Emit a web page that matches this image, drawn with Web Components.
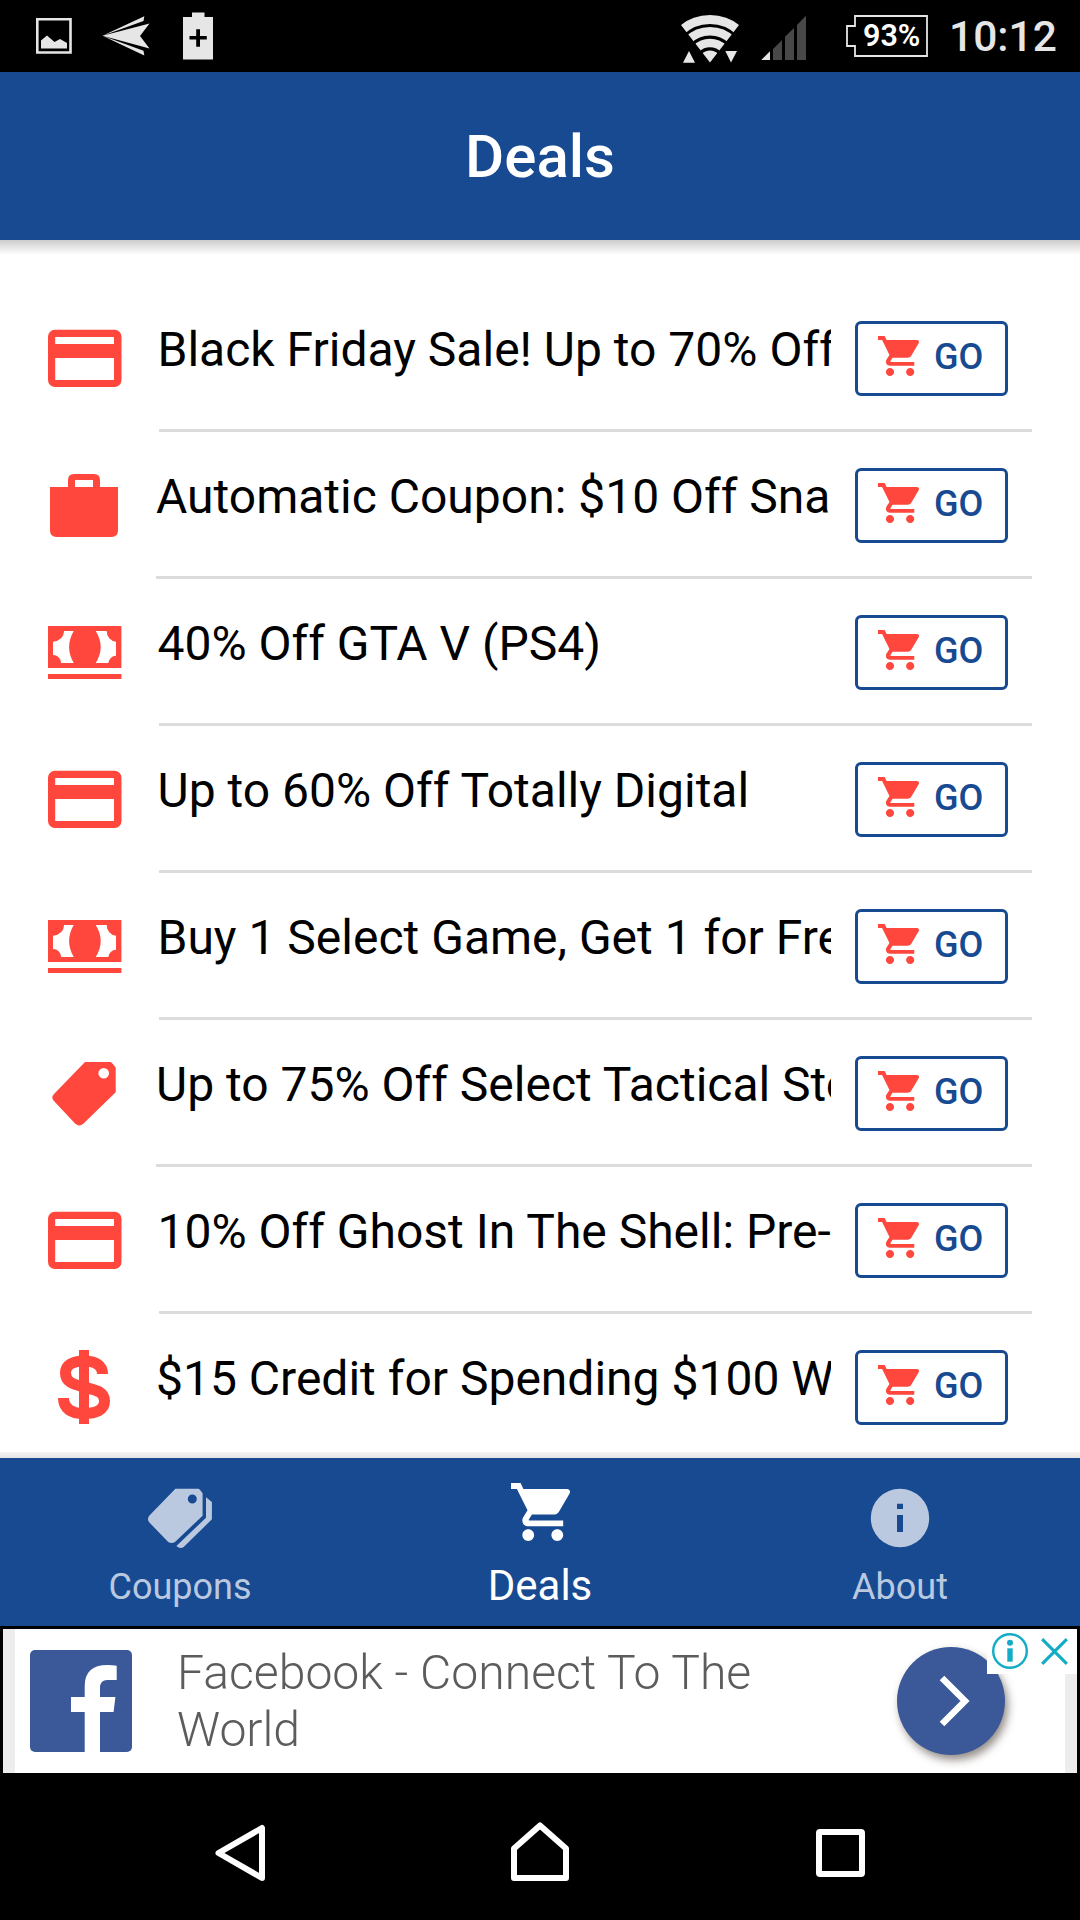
<!DOCTYPE html>
<html lang="en">
<head>
<meta charset="utf-8">
<title>Deals</title>
<style>
  body {
    margin: 0;
    background: #000;
    font-family: Roboto, sans-serif;
  }
</style>
</head>
<body>
<deals-app></deals-app>

<script>
const CART = `<path d="M169.6 377.6c-22.9 0-41.6 18.7-41.6 41.6s18.700 41.600 41.600 41.600 41.600-18.700 41.600-41.600-18.700-41.600-41.600-41.600zM48 51.200v41.600h41.600l74.900 151.700-31.300 51c-3.100 5.200-5.200 12.500-5.200 19.700 0 27.900 19 41.600 44.800 41.600H416v-40H177.900c-3.100 0-5.200-2.100-5.200-5.200 0-1 2.200-5.200 2.200-5.200l20.800-32.800h155c15.600 0 29.100-8.300 36.400-21.800l74.900-128.800c1.200-2.500 2.100-6.200 2.100-10.400 0-11.400-9.400-19.800-20.800-19.800H135.400L115.600 51.200H48zm326.400 326.400c-22.900 0-41.600 18.700-41.600 41.600s18.700 41.600 41.600 41.600 41.600-18.700 41.600-41.600-18.700-41.600-41.600-41.600z"/>`;

// name: [viewBox, markup]
const ICONS = {
  cart: ["48 51.2 416 409.6", CART],
  card: ["0 0 84 84", `<path fill-rule="evenodd" d="M13 13.700h59.500a7 7 0 0 1 7 7V64a7 7 0 0 1-7 7H13a7 7 0 0 1-7-7V20.700a7 7 0 0 1 7-7zM13.200 21v7H72v-7zM13.200 42v22H72V42z"/>`],
  briefcase: ["0 0 84 84", `<path fill-rule="evenodd" d="M8 24h18v-7q0-6 6-6h20q6 0 6 6v7h18v43.500q0 6.500-6.500 6.500h-55Q8 74 8 67.500zM33 17v7h18v-7z"/>`],
  cash: ["0 0 84 84", `<path fill-rule="evenodd" d="M6 16h73.400v42H6zM22 21h9.700Q22.500 37 31.700 53H19a8 8 0 0 0-8-8V31.700A11 11 0 0 0 22 21zM53.700 21h11A10.500 10.500 0 0 0 74 31.700v14a8 8 0 0 0-7.700 7.300H53.700q10-16 0-32zM6 64h73.400v5H6z"/>`],
  tag: ["0 0 84 84", `<path fill-rule="evenodd" d="M43 11h25q2 0 5.700 5.700v24.600L41.300 72.700q-4 3.500-8 0L11.700 49.700q-3-3.300.3-6.700zM67 22.300a5.300 5.300 0 1 0-10.600 0 5.300 5.300 0 0 0 10.600 0z"/>`],
  dollar: ["0 0 84 84", `<path d="M37 5h10v74H37z"/><path fill="none" stroke="currentColor" stroke-width="11" d="M60.500 29C60.500 20 53 16 42 16S23.500 20 23.500 28c0 10 9.500 11.500 18.500 14 11 3 20.500 4 20.500 14 0 9-8.500 12.500-20.500 12.500-13 0-20.500-5-20.500-15.500"/>`],
  tags: ["0 0 72 72", `<path fill-rule="evenodd" d="M31.400 6.700h23.400q1.500 1 3.800 4.600v22.400L31 60q-3.400 2.200-6.800 0l-19-19.700q-2.500-3.300 0-6.600zM52.800 17a4.500 4.500 0 1 0-9 0 4.500 4.500 0 0 0 9 0zM62 15.300l5.900 4.700v17.300L39.700 65q-3.700 2.400-7.300-1L62 35.700z"/>`],
  info: ["0 0 72 72", `<path fill-rule="evenodd" d="M36 6.800a29.200 29.200 0 1 1 0 58.400 29.200 29.200 0 0 1 0-58.400zM33 21.700v5.300h6v-5.300zM33 33v17h6V33z"/>`],
  picture: ["0 0 36 36", `<path fill="none" stroke="currentColor" stroke-width="2.600" d="M1.300 1.300h33.200v33.200H1.300z"/><path d="M5 30.500v-8l6-5 7.500 6.500 5.500-3 7 4v5.500z"/>`],
  plane: ["0 0 48 40" , `<path d="M.5 19.700L42.300.300 41.500 5zM.5 19.700L47.500 7.500 38 20l9.500 12.500zM.5 19.700l41 15 .8 4.700z"/>`],
  plus: ["0 0 30 48", `<path fill-rule="evenodd" d="M9 .500h12.500V5H30v42.500H0V5h9zM13.200 17.300V24H6.500v3.500h6.700v7.300h3.800v-7.300h6.800V24H17v-6.700z"/>`],
  wifi: ["0 0 60 50", `<clipPath id="w"><path d="M30 48.500L-10.600-4h81.200z"/></clipPath><g clip-path="url(#w)" fill="none" stroke="currentColor"><circle cx="30" cy="48.500" r="43" stroke-width="9"/><circle cx="30" cy="48.500" r="31.200" stroke-width="8.500"/><circle cx="30" cy="48.500" r="19.500" stroke-width="8.500"/><circle cx="30" cy="48.500" r="6" stroke-width="12"/></g><path d="M3 48.700h12L9 37zM45.300 37H57l-6 11.500z"/>`],
  signal: ["0 0 48 48", `<path d="M1.300 46H10v-8.700z"/><path fill="#484848" d="M13 46h9V26l-9 9zM25 46h9V14l-9 8.700zM37 46h9V1.700L37 11z"/>`],
  battery: ["0 0 82 42", `<path fill="none" stroke="currentColor" stroke-width="1.800" d="M9 1h72v40H9V31H1V11h8z"/>`],
  facebook: ["0 0 102 102", `<rect width="102" height="102" rx="5" fill="#3b5998"/><path fill="#fff" d="M54.700 102V62H41V47h13.700V36q0-21 22.700-21 5 0 9.300.700V30h-9.300q-7.400 0-7.400 8V47h15.400l-1.800 15H70v40z"/>`],
  arrow: ["0 0 108 108", `<path fill="none" stroke="#fff" stroke-width="6.500" d="M45 31L68 54 45 77"/>`],
  adinfo: ["0 0 36 36", `<circle cx="18" cy="18" r="16.800" fill="none" stroke="currentColor" stroke-width="2.400"/><circle cx="18" cy="9.700" r="3"/><path d="M15.300 15.300h5.400v13.400h-5.400z"/>`],
  close: ["0 0 28 28", `<path fill="none" stroke="currentColor" stroke-width="3.200" d="M1.200 1.200l25.600 25.600M26.800 1.200L1.200 26.800"/>`],
  back: ["0 0 60 60", `<path fill="none" stroke="currentColor" stroke-width="6" stroke-linejoin="round" d="M52 5v50L8.500 30z"/>`],
  home: ["0 0 60 60", `<path fill="none" stroke="currentColor" stroke-width="6" stroke-linejoin="round" d="M4 57V27.500L30 4.500l26 23V57z"/>`],
  recents: ["0 0 60 60", `<rect x="9" y="9" width="43" height="42" rx="1" fill="none" stroke="currentColor" stroke-width="6"/>`],
};

class AppIcon extends HTMLElement {
  connectedCallback() {
    const [box, markup] = ICONS[this.getAttribute("name")];
    this.attachShadow({ mode: "open" }).innerHTML = `
      <style>
        :host { display: block; flex: none; }
        svg { display: block; width: 100%; height: 100%; fill: currentColor; }
      </style>
      <svg viewBox="${box}" preserveAspectRatio="none">${markup}</svg>`;
  }
}
customElements.define("app-icon", AppIcon);

// small helper for the elements that are only markup + styles
function define(name, html) {
  const template = document.createElement("template");
  template.innerHTML = html;
  customElements.define(name, class extends HTMLElement {
    constructor() {
      super();
      this.attachShadow({ mode: "open" });
      this.shadowRoot.appendChild(template.content.cloneNode(true));
    }
  });
}

define("status-bar", `
<style>
  :host {
    display: flex;
    justify-content: space-between;
    height: 72px;
    background: #000;
    color: #e6e6e6;
  }
  .side { display: flex; align-items: flex-start; }
  .left { padding-left: 36px; }
  .right { padding-right: 24px; }
  .picture { width: 36px; height: 36px; margin-top: 18px; }
  .plane { width: 48px; height: 40px; margin: 16px 0 0 30px; }
  .plus { width: 30px; height: 48px; margin: 12px 0 0 33px; }
  .wifi { width: 60px; height: 50px; margin-top: 14px; }
  .signal { width: 48px; height: 48px; margin: 14px 0 0 20px; }
  .battery { display: grid; width: 82px; height: 42px; margin: 15px 0 0 38px; }
  .battery > * { grid-area: 1 / 1; }
  .battery span {
    padding-left: 17px;
    font-size: 30.5px;
    font-weight: 600;
    line-height: 41px;
    color: #fff;
  }
  .time { width: 107px; margin-left: 21px; font-size: 42.5px; font-weight: 500; line-height: 73px; white-space: nowrap; }
</style>
<div class="side left">
  <app-icon class="picture" name="picture"></app-icon>
  <app-icon class="plane" name="plane"></app-icon>
  <app-icon class="plus" name="plus"></app-icon>
</div>
<div class="side right">
  <app-icon class="wifi" name="wifi"></app-icon>
  <app-icon class="signal" name="signal"></app-icon>
  <div class="battery"><app-icon name="battery"></app-icon><span>93%</span></div>
  <div class="time">10:12</div>
</div>
`);

define("title-bar", `
<style>
  :host {
    display: block;
    height: 168px;
    background: #174a91;
    color: #fff;
    font-size: 60px;
    font-weight: 500;
    line-height: 169px;
    text-align: center;
  }
</style>
<slot></slot>
`);

define("go-button", `
<style>
  :host {
    display: flex;
    flex: none;
    box-sizing: border-box;
    width: 153px;
    height: 75px;
    padding-left: 20px;
    border: 3px solid #174a91;
    border-radius: 6px;
    color: #174a91;
  }
  app-icon { width: 41px; height: 40px; margin-top: 12px; color: #ff473d; }
  span { margin-left: 15px; font-size: 36px; font-weight: 500; line-height: 66px; }
</style>
<app-icon name="cart"></app-icon>
<span><slot></slot></span>
`);

class DealItem extends HTMLElement {
  connectedCallback() {
    const icon = this.getAttribute("icon");
    // the card and cash glyphs are 3px wider than the others
    const wide = icon === "card" || icon === "cash";
    this.attachShadow({ mode: "open" }).innerHTML = `
      <style>
        :host { display: flex; height: 147px; padding: 0 48px 0 42px; }
        app-icon { width: 84px; height: 84px; margin-top: 31px; color: #ff473d; }
        .inner {
          display: flex;
          flex: 1;
          min-width: 0;
          box-sizing: border-box;
          margin-left: ${wide ? 33 : 30}px;
          padding-right: 24px;
          border-bottom: 3px solid #dcdcdc;
        }
        .title {
          flex: 1;
          min-width: 0;
          height: 80px;
          margin: 25px 24px 0 ${wide ? -1.5 : 0}px;
          overflow: hidden;
          white-space: nowrap;
          font-size: 48px;
          line-height: 80px;
          color: #000;
        }
        go-button { margin-top: 36px; }
      </style>
      <app-icon name="${icon}"></app-icon>
      <div class="inner">
        <div class="title"><slot></slot></div>
        <go-button>GO</go-button>
      </div>`;
  }
}
customElements.define("deal-item", DealItem);

define("deal-list", `
<style>
  :host {
    display: block;
    box-sizing: border-box;
    height: 1218px;
    padding-top: 45px;
    overflow: hidden;
    background:
      linear-gradient(#cbcbcb, #e4e4e4 45%, #fff) top / 100% 15px no-repeat,
      #fff;
  }
</style>
<slot></slot>
`);

class TabItem extends HTMLElement {
  connectedCallback() {
    this.attachShadow({ mode: "open" }).innerHTML = `
      <style>
        :host {
          display: flex;
          flex: 1;
          flex-direction: column;
          align-items: center;
          color: #bac9e0;
          font-size: 36px;
        }
        app-icon { width: 72px; height: 72px; margin-top: 24px; }
        span { margin-top: 12px; line-height: 42px; }
        :host([selected]) { color: #fff; font-size: 42px; }
        :host([selected]) app-icon { width: 59px; height: 58px; margin: 25px 0; }
        :host([selected]) span { margin-top: -1px; }
      </style>
      <app-icon name="${this.getAttribute("icon")}"></app-icon>
      <span><slot></slot></span>`;
  }
}
customElements.define("tab-item", TabItem);

define("tab-bar", `
<style>
  :host {
    display: flex;
    position: relative;
    height: 168px;
    background: #174a91;
  }
  :host::before {
    content: "";
    position: absolute;
    top: -6px;
    left: 0;
    width: 100%;
    height: 6px;
    background: linear-gradient(#f5f5f5, #e4e4e4);
  }
</style>
<slot></slot>
`);

define("ad-banner", `
<style>
  :host {
    display: flex;
    position: relative;
    box-sizing: border-box;
    height: 144px;
    margin: 3px 3px 0;
    border: solid #ededed;
    border-width: 0 12px;
    background: #fff;
  }
  .logo { width: 102px; height: 102px; margin: 21px 0 0 15px; }
  .text {
    width: 600px;
    margin: 15px 0 0 45px;
    font-size: 48.1px;
    font-weight: 300;
    line-height: 57px;
    color: #5c5c5c;
  }
  .arrow {
    width: 108px;
    height: 108px;
    margin: 18px 60px 0 auto;
    border-radius: 50%;
    background: #3b5998;
    box-shadow: 3px 5px 9px rgba(60, 50, 40, .55);
  }
  .choices {
    display: flex;
    position: absolute;
    top: 0;
    right: -12px;
    box-sizing: border-box;
    width: 90px;
    height: 45px;
    background: #fff;
    color: #12acc6;
  }
  .info { width: 36px; height: 36px; margin: 4px 0 0 5px; }
  .close { width: 27px; height: 27px; margin: 9px 0 0 13px; }
</style>
<app-icon class="logo" name="facebook"></app-icon>
<div class="text"><slot></slot></div>
<app-icon class="arrow" name="arrow"></app-icon>
<div class="choices">
  <app-icon class="info" name="adinfo"></app-icon>
  <app-icon class="close" name="close"></app-icon>
</div>
`);

define("nav-bar", `
<style>
  :host {
    display: flex;
    justify-content: center;
    gap: 240px;
    height: 147px;
    background: #000;
    color: #fff;
  }
  app-icon { width: 60px; height: 60px; margin-top: 50px; }
</style>
<app-icon name="back"></app-icon>
<app-icon name="home" style="margin-top: 48px"></app-icon>
<app-icon name="recents"></app-icon>
`);

define("deals-app", `
<style>
  :host { display: block; width: 1080px; height: 1920px; overflow: hidden; }
</style>
<status-bar></status-bar>
<title-bar>Deals</title-bar>
<deal-list>
  <deal-item icon="card">Black Friday Sale! Up to 70% Off</deal-item>
  <deal-item icon="briefcase">Automatic Coupon: $10 Off Sna</deal-item>
  <deal-item icon="cash">40% Off GTA V (PS4)</deal-item>
  <deal-item icon="card">Up to 60% Off Totally Digital</deal-item>
  <deal-item icon="cash">Buy 1 Select Game, Get 1 for Free</deal-item>
  <deal-item icon="tag">Up to 75% Off Select Tactical Sto</deal-item>
  <deal-item icon="card">10% Off Ghost In The Shell: Pre-</deal-item>
  <deal-item icon="dollar">$15 Credit for Spending $100 W</deal-item>
</deal-list>
<tab-bar>
  <tab-item icon="tags">Coupons</tab-item>
  <tab-item icon="cart" selected>Deals</tab-item>
  <tab-item icon="info">About</tab-item>
</tab-bar>
<ad-banner>Facebook - Connect To The World</ad-banner>
<nav-bar></nav-bar>
`);
</script>
</body>
</html>
